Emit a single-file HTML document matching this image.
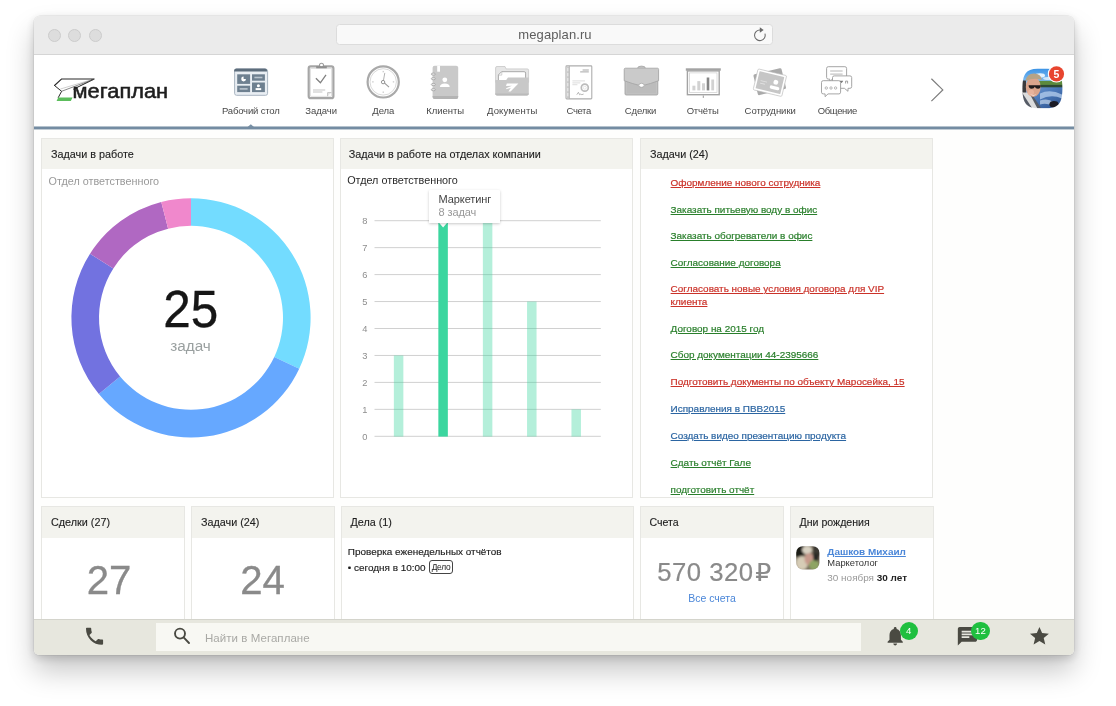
<!DOCTYPE html>
<html lang="ru">
<head>
<meta charset="utf-8">
<title>Мегаплан</title>
<style>
*{box-sizing:border-box;margin:0;padding:0}
html,body{width:1116px;height:706px;overflow:hidden;background:#fff}
body{font-family:"Liberation Sans",Arial,sans-serif;position:relative;color:#222}
.abs{position:absolute}
#win{will-change:transform;position:absolute;left:34px;top:16px;width:1040px;height:639px;border-radius:6px 6px 5px 5px;background:#fefefd;
  box-shadow:0 0 0 0.5px rgba(0,0,0,.10),0 16px 28px rgba(0,0,0,.22),0 3px 10px rgba(0,0,0,.16);overflow:hidden}
#tb{position:absolute;left:0;top:0;width:1040px;height:38.5px;background:#ebebeb;border-bottom:1px solid #d5d5d5}
.tl{position:absolute;top:12.5px;width:13px;height:13px;border-radius:50%;background:#dddddd;border:0.7px solid #cccccc}
#url{position:absolute;left:301.5px;top:8px;width:437px;height:21px;background:#f9f9f9;border:1px solid #dcdcdc;border-radius:3.5px;
  text-align:center;font-size:13px;line-height:20.6px;color:#5e5e5e;letter-spacing:.1px}
#nav{position:absolute;left:0;top:38.5px;width:1040px;height:72px;background:#fff}
#navline{position:absolute;left:0;top:110px;width:1040px;height:4px;background:linear-gradient(to bottom,rgba(120,144,165,.55) 0,rgba(120,144,165,.55) 1px,#748ca2 1px,#748ca2 3px,rgba(120,144,165,.45) 3px,rgba(120,144,165,.45) 4px)}
.ni{position:absolute;top:0;height:72px;text-align:center}
.nl{position:absolute;top:50.5px;font-size:9.5px;letter-spacing:-.19px;color:#484848;white-space:nowrap;transform:translateX(-50%);line-height:11px}
.panel{position:absolute;background:#fff;border:1px solid #e7e7e3}
.ph{position:absolute;left:0;top:0;right:0;height:30px;background:#f3f3ee;font-size:10.8px;line-height:30px;padding-left:9px;color:#1e1e1e;white-space:nowrap;-webkit-text-stroke:.12px #1e1e1e}
a{text-decoration:underline}
.tk{margin-top:-1.2px;position:absolute;left:29.6px;font-size:9.95px;line-height:11.5px;white-space:nowrap;-webkit-text-stroke:.2px currentColor}
.r{color:#cb3229}.g{color:#297f2b}.b{color:#2b65a2}
#bar{position:absolute;left:0;top:603px;width:1040px;height:36px;background:#e7e7de;border-top:1px solid #d4d4cc}
#search{position:absolute;left:122px;top:3px;width:705px;height:28px;background:#f8f8f3}
.badge{position:absolute;width:18.4px;height:18.4px;border-radius:50%;background:#1fbf3f;color:#fff;font-size:9.6px;line-height:18.4px;text-align:center}
</style>
</head>
<body>
<div id="win">
  <div id="tb">
    <div class="tl" style="left:14px"></div>
    <div class="tl" style="left:34px"></div>
    <div class="tl" style="left:55px"></div>
    <div id="url"><span style="position:relative;left:1px">megaplan.ru</span>
      <svg class="abs" style="left:414px;top:0px" width="18" height="19" viewBox="750.5 25 18 19"><path d="M764.4 33.6 a5.300 5.300 0 1 1 -4.800 -3.600" fill="none" stroke="#6a6a6a" stroke-width="1.05"/><path d="M759.300 27.200 L763.200 30 L759.300 32.800 Z" fill="#6a6a6a"/></svg>
    </div>
  </div>
  <div id="nav">
<svg class="abs" style="left:0;top:0" width="1040" height="76" viewBox="34 54.5 1040 76">
  <!-- logo plane -->
  <g fill="none" stroke="#2a2a2a" stroke-width="1" stroke-linejoin="miter" stroke-linecap="round">
    <path d="M54.5 85 L61.500 78.500 L94.200 78.500 L73.600 88.600" stroke-width="1.05"/>
    <path d="M54.5 85 L61.600 90.800 L58.300 97"/>
    <path d="M61.600 90.800 L94.200 78.500" stroke-width=".7" stroke="#555"/>
    <path d="M60.800 88.400 L89 80" stroke-width=".45" stroke="#999"/>
  </g>
  <path d="M58.200 97 L72.600 97 L70.800 100.400 L56.600 100.400 Z" fill="#5cbd5c"/>
  <text x="72.6" y="97.4" font-family="'Liberation Sans',Arial,sans-serif" font-size="20.6" fill="#1e1e1e" stroke="#1e1e1e" stroke-width=".55" textLength="95.6" lengthAdjust="spacingAndGlyphs">мегаплан</text>

  <!-- dashboard icon -->
  <g>
    <rect x="234.6" y="68.6" width="33" height="26.2" rx="2" fill="#e9eef3" stroke="#a9b5c1" stroke-width="1"/>
    <path d="M234.1 70.900 v-.7 a2.2 2.2 0 0 1 2.2 -2.2 h28.6 a2.2 2.2 0 0 1 2.2 2.2 v.7 z" fill="#5d6d7c"/>
    <rect x="237.2" y="73.8" width="12.9" height="9.6" fill="#6e8090"/>
    <rect x="252" y="73.8" width="12.9" height="6.4" fill="#6e8090"/>
    <rect x="237.2" y="85.2" width="12.9" height="6.4" fill="#6e8090"/>
    <rect x="252" y="82" width="12.9" height="9.6" fill="#6e8090"/>
    <path d="M243.600 76.100 a2.400 2.400 0 1 0 2.400 2.400 h-2.400 z" fill="#fff"/>
    <rect x="254.4" y="76.2" width="8" height="1.6" fill="#b9c4ce"/>
    <rect x="239.6" y="87.6" width="8" height="1.6" fill="#b9c4ce"/>
    <circle cx="258.4" cy="85.3" r="1.5" fill="#fff"/>
    <rect x="255.6" y="87.6" width="5.6" height="2" fill="#fff"/>
  </g>

  <!-- tasks clipboard -->
  <g>
    <rect x="308.700" y="65.900" width="24.700" height="31.800" rx="2" fill="#fff" stroke="#a6a6a6" stroke-width="2.200"/>
    <rect x="310.700" y="67.900" width="20.700" height="27.800" fill="#fff" stroke="#d0d0d0" stroke-width=".6"/>
    <path d="M327.600 95.700 v-3.600 h3.800" fill="#e8e8e8" stroke="#b0b0b0" stroke-width=".7"/>
    <circle cx="321.500" cy="64.700" r="2" fill="#fff" stroke="#9a9a9a" stroke-width="1.100"/>
    <rect x="316.200" y="65.600" width="10.600" height="2.200" fill="#8f8f8f"/>
    <path d="M315.900 77.700 L320.400 82.300 L326 74.300" fill="none" stroke="#808080" stroke-width="1.300"/>
    <path d="M313 89.500 h12.200 M313 91.500 h9.400" stroke="#b4b4b4" stroke-width=".8"/>
  </g>

  <!-- clock -->
  <g>
    <circle cx="383.2" cy="81.4" r="15.6" fill="#fff" stroke="#a9a9a9" stroke-width="2.2"/>
    <circle cx="383.2" cy="81.4" r="13.2" fill="none" stroke="#cfcfcf" stroke-width=".8"/>
    <path d="M383.2 70.4 v1.4 M383.2 91 v1.4 M372.2 81.4 h1.4 M392.8 81.4 h1.4" stroke="#aaa" stroke-width=".8"/>
    <path d="M383.2 81.4 L384.8 72.4" stroke="#aaa" stroke-width=".9" fill="none"/>
    <path d="M383.2 81.4 L389 86.6" stroke="#999" stroke-width="1.1" fill="none"/>
    <circle cx="383.1" cy="81.6" r="1.7" fill="#fff" stroke="#888" stroke-width=".9"/>
  </g>

  <!-- clients book -->
  <g>
    <rect x="432.6" y="65.2" width="25.6" height="33.2" rx="2" fill="#c9c9c9"/>
    <path d="M432.6 95.4 h25.6 v1 a2 2 0 0 1 -2 2 h-21.6 a2 2 0 0 1 -2 -2 z" fill="#b4b4b4"/>
    <rect x="437.2" y="65.2" width="2.8" height="6" fill="#fff"/>
    <g fill="none" stroke="#a8a8a8" stroke-width=".9">
      <ellipse cx="433.4" cy="73.6" rx="2.1" ry="1.1" fill="#e6e6e6"/>
      <ellipse cx="433.4" cy="78.2" rx="2.1" ry="1.1" fill="#e6e6e6"/>
      <ellipse cx="433.4" cy="84" rx="2.1" ry="1.1" fill="#e6e6e6"/>
      <ellipse cx="433.4" cy="89.2" rx="2.1" ry="1.1" fill="#e6e6e6"/>
    </g>
    <circle cx="444.8" cy="79.3" r="2.4" fill="#fff"/>
    <path d="M439.9 86.6 q0 -3.6 4.9 -3.6 q4.9 0 4.9 3.6 z" fill="#fff"/>
  </g>

  <!-- documents folder -->
  <g>
    <path d="M495.600 67.400 a1.400 1.400 0 0 1 1.400 -1.400 h8 l1 2.400 h21.200 a1.400 1.400 0 0 1 1.400 1.400 v12 h-33 z" fill="#e6e6e6" stroke="#c2c2c2" stroke-width=".7"/>
    <path d="M498.400 80 v-5.600 l3.200 -3.200 h22.600 a1.400 1.400 0 0 1 1.400 1.400 v7.400 z" fill="#fff" stroke="#a0a0a0" stroke-width=".9"/>
    <path d="M498.600 74.600 h3.200 v-3.200" fill="none" stroke="#b4b4b4" stroke-width=".6"/>
    <path d="M495.200 79.600 h11 l1.800 -2.600 h20.800 v16.200 a1.800 1.800 0 0 1 -1.800 1.800 h-30 a1.800 1.800 0 0 1 -1.800 -1.800 z" fill="#c8c8c8"/>
    <path d="M495.200 93 h33.600 v.2 a1.800 1.800 0 0 1 -1.800 1.800 h-30 a1.800 1.800 0 0 1 -1.800 -1.800 z" fill="#bababa"/>
    <path d="M506.800 83.100 L518.400 83 L510.600 90.900 L508.400 90.900 L510.800 87.400 L505.800 88.800 L506.600 87.400 L512 85.200 L506 85.400 Z" fill="#fff"/>
  </g>

  <!-- invoices -->
  <g>
    <rect x="566" y="65.400" width="25.800" height="33" rx=".8" fill="#fff" stroke="#adadad" stroke-width="1.1"/>
    <rect x="566.500" y="65.900" width="2.700" height="32" fill="#c9c9c9"/>
    <path d="M569.400 65.600 v32.600" stroke="#ababab" stroke-width=".8"/>
    <path d="M567.800 67.400 v29.600" stroke="#f4f4f4" stroke-width=".9" stroke-dasharray="3.400 1.600"/>
    <path d="M582.600 69.500 h6.200 M580.200 71.400 h8.600" stroke="#9c9c9c" stroke-width=".9"/>
    <path d="M572.400 80.400 h12.600 M572.400 82.400 h8 M572.400 84.200 h5" stroke="#cfcfcf" stroke-width=".7"/>
    <circle cx="584.800" cy="87.200" r="3.500" fill="#fff" stroke="#bcbcbc" stroke-width="1.700"/>
    <circle cx="584.800" cy="87.200" r="1.500" fill="#fff" stroke="#d0d0d0" stroke-width=".5"/>
    <path d="M576.800 94.200 l1.600 -2.400 l1.200 2.400 q1.400 -1.400 2.200 0 l1.800 -.6" fill="none" stroke="#999" stroke-width=".7"/>
  </g>

  <!-- deals briefcase -->
  <g>
    <path d="M637.6 67.700 q0 -2.100 3.900 -2.100 q3.900 0 3.900 2.100" fill="#c6c6c6" stroke="#a4a4a4" stroke-width=".8"/>
    <rect x="625" y="69" width="32.800" height="25.500" rx="1.200" fill="#bcbcbc" stroke="#a6a6a6" stroke-width=".9"/>
    <rect x="626.300" y="70" width="30.200" height="23.300" rx=".6" fill="none" stroke="#c9c9c9" stroke-width=".5"/>
    <path d="M624.200 68.900 q0 -1.200 1.200 -1.200 h32 q1.200 0 1.200 1.200 v11.300 q-8.800 3.200 -14.400 4.500 h-5.600 q-5.600 -1.300 -14.400 -4.500 z" fill="#cacaca" stroke="#a2a2a2" stroke-width=".8" stroke-linejoin="round"/>
    <ellipse cx="641.500" cy="84.800" rx="2.700" ry="2" fill="#fff" stroke="#a6a6a6" stroke-width=".8"/>
  </g>

  <!-- reports board -->
  <g>
    <rect x="685.8" y="67.8" width="35" height="2.4" fill="#a3a3a3"/>
    <rect x="687.4" y="70.4" width="31.8" height="23.8" fill="#fff" stroke="#a3a3a3" stroke-width="1.4"/>
    <rect x="689.6" y="72.4" width="27.4" height="19.6" fill="none" stroke="#cdcdcd" stroke-width=".7"/>
    <rect x="692.4" y="85.2" width="3" height="4.7" fill="#d2d2d2"/>
    <rect x="697.3" y="80.6" width="3" height="9.3" fill="#d2d2d2"/>
    <rect x="702" y="82.8" width="3" height="7.1" fill="#d2d2d2"/>
    <rect x="706.7" y="77" width="2.6" height="12.9" fill="#858585"/>
    <rect x="711.3" y="79" width="2.8" height="10.9" fill="#d2d2d2"/>
    <path d="M703.3 95 v2.4" stroke="#999" stroke-width="1"/>
  </g>

  <!-- staff cards -->
  <g>
    <rect x="755.250" y="70.550" width="28.900" height="21.300" rx="1.600" fill="#aaaaaa" transform="rotate(-13.6 769.7 81.2)"/>
    <g transform="rotate(13.4 769.9 82.2)">
      <rect x="755.200" y="71.450" width="29.400" height="21.500" rx="1.300" fill="#fff" stroke="#b9b9b9" stroke-width=".6"/>
      <rect x="757.200" y="73.450" width="25.400" height="17.500" rx=".4" fill="#c6c6c6"/>
      <circle cx="775.600" cy="80.400" r="2.400" fill="#fff"/>
      <rect x="770.700" y="84.400" width="9.800" height="3.400" rx="1.700" fill="#fff"/>
      <rect x="760.400" y="81.900" width="6.600" height=".9" fill="#e2e2e2"/>
      <rect x="760.400" y="84.400" width="5" height=".9" fill="#e2e2e2"/>
    </g>
  </g>

  <!-- chat bubbles -->
  <g fill="#fff" stroke="#9c9c9c" stroke-width=".9" stroke-linejoin="round">
    <path d="M828.300 66.200 h16.600 a1.700 1.700 0 0 1 1.700 1.700 v9 a1.700 1.700 0 0 1 -1.700 1.700 h-12.600 l-2.600 2.600 v-2.600 h-1.400 a1.700 1.700 0 0 1 -1.700 -1.700 v-9 a1.700 1.700 0 0 1 1.700 -1.700 z"/>
    <path d="M834.200 75.400 h15.800 a1.700 1.700 0 0 1 1.700 1.700 v9 a1.700 1.700 0 0 1 -1.700 1.700 h-2 v3 l-3.600 -3 h-10.200 a1.700 1.700 0 0 1 -1.700 -1.700 v-9 a1.700 1.700 0 0 1 1.700 -1.700 z"/>
    <path d="M823.200 80.200 h15.700 a1.700 1.700 0 0 1 1.700 1.700 v9.800 a1.700 1.700 0 0 1 -1.700 1.700 h-10.900 l-2.900 2.800 v-2.800 h-1.900 a1.700 1.700 0 0 1 -1.700 -1.700 v-9.800 a1.700 1.700 0 0 1 1.700 -1.700 z"/>
    <path d="M830.200 70.500 h12.400 M830.200 73.600 h12.400" stroke="#a2a2a2" stroke-width=".8" fill="none"/>
    <circle cx="826.300" cy="87.500" r="1.200" stroke-width=".7"/>
    <circle cx="831" cy="87.500" r="1.200" stroke-width=".7"/>
    <circle cx="835.600" cy="87.500" r="1.200" stroke-width=".7"/>
    <path d="M840 80.400 h3 l-1.500 2 z" stroke="#777" stroke-width=".4" fill="#777"/>
    <path d="M845.600 83 v-2.400 h2 v2.400" stroke="#888" stroke-width=".8" fill="none"/>
  </g>

  <!-- chevron -->
  <path d="M931.4 78.2 L942.8 89.4 L931.4 100.6" fill="none" stroke="#7d7d7d" stroke-width="1.2"/>

  <!-- active marker -->
  <path d="M247.6 126.6 L250.8 123.8 L254 126.6 Z" fill="#7890a5"/>
</svg>
<div class="nl" style="left:216.8px;letter-spacing:-0.16px">Рабочий стол</div>
<div class="nl" style="left:287.2px;letter-spacing:-0.04px">Задачи</div>
<div class="nl" style="left:349.3px;letter-spacing:-0.05px">Дела</div>
<div class="nl" style="left:411.2px;letter-spacing:-0.03px">Клиенты</div>
<div class="nl" style="left:478.2px;letter-spacing:0.17px">Документы</div>
<div class="nl" style="left:544.7px;letter-spacing:-0.4px">Счета</div>
<div class="nl" style="left:606.5px;letter-spacing:-0.18px">Сделки</div>
<div class="nl" style="left:668.6px;letter-spacing:-0.23px">Отчёты</div>
<div class="nl" style="left:736.2px;letter-spacing:-0.02px">Сотрудники</div>
<div class="nl" style="left:803.3px;letter-spacing:-0.36px">Общение</div>
</div>
  <svg class="abs" style="left:986px;top:48.5px" width="48" height="48" viewBox="1020 64.5 48 48">
  <defs><clipPath id="av"><path d="M1042.4 68 c13.5 0 20 1.600 20 19.900 c0 18.300 -6.500 19.900 -20 19.900 c-13.500 0 -20 -1.600 -20 -19.900 c0 -18.300 6.500 -19.900 20 -19.900 z"/></clipPath>
  <filter id="avb" x="-20%" y="-20%" width="140%" height="140%"><feGaussianBlur stdDeviation=".7"/></filter>
  <linearGradient id="sky" x1="0" y1="0" x2="0" y2="1"><stop offset="0" stop-color="#2686e2"/><stop offset="1" stop-color="#9ccdf4"/></linearGradient>
  <linearGradient id="wat" x1="0" y1="0" x2="1" y2="1"><stop offset="0" stop-color="#86a9d6"/><stop offset=".45" stop-color="#4a78ba"/><stop offset="1" stop-color="#27487f"/></linearGradient></defs>
  <g clip-path="url(#av)"><g filter="url(#avb)">
    <rect x="1018" y="64" width="50" height="22" fill="url(#sky)"/>
    <ellipse cx="1040" cy="75" rx="5" ry="2.200" fill="#e3f1fc"/>
    <ellipse cx="1049" cy="78" rx="6" ry="1.600" fill="#cfe6fa"/>
    <rect x="1018" y="85" width="50" height="26" fill="url(#wat)"/>
    <rect x="1036" y="80.400" width="30" height="4.800" fill="#5c8a3e"/>
    <rect x="1036" y="84.400" width="30" height="2.400" fill="#2d4a30"/>
    <path d="M1040 93 q10 -5 22 1 l0 4 q-11 -5 -22 1 z" fill="#b7cfee" opacity=".75"/>
    <path d="M1040 100 q8 -3 14 2 l-2 3 q-6 -3 -12 -1 z" fill="#dbe7f6" opacity=".6"/>
    <ellipse cx="1054" cy="103.800" rx="4.600" ry="3.400" fill="#1a1d28"/>
    <rect x="1020" y="80" width="6" height="14" fill="#3b3a3c"/>
    <path d="M1020 95 q6 -4 12 -1 l10 15 h-22 z" fill="#565b66"/>
    <path d="M1022 92 l7 0 l9 17 h-5 z" fill="#dcdcdc"/>
    <ellipse cx="1033.200" cy="86.400" rx="7.400" ry="10" fill="#dba58c"/>
    <ellipse cx="1031" cy="92" rx="3" ry="3" fill="#e8b39c"/>
    <path d="M1025.600 80.600 q1 -7.600 8.400 -7.600 q7 0 8 6.600 q-8 -3 -16.400 1 z" fill="#b5a386"/>
    <path d="M1028.600 84.800 h12 q.4 3.400 -2.600 3.400 q-2.400 0 -3.200 -2 q-.6 2 -3.200 2 q-3 0 -3 -3.400 z" fill="#201d1c"/>
    <path d="M1030 93.400 q3.400 2.200 6.600 0 q-3.200 3.600 -6.600 0 z" fill="#f6efeb"/>
  </g></g>
  <circle cx="1056.500" cy="73.400" r="8.700" fill="#fff"/>
  <circle cx="1056.500" cy="73.400" r="7.600" fill="#e8452f"/>
  <text x="1056.500" y="77.100" text-anchor="middle" font-family="'Liberation Sans',Arial,sans-serif" font-weight="bold" font-size="10.5" fill="#fff">5</text>
</svg>
  <div id="navline"></div>

  <!-- panels row 1 -->
  <div class="panel" style="left:7px;top:122px;width:293px;height:360px">
    <div class="ph">Задачи в работе</div>
    <div class="abs" style="left:6.5px;top:36px;font-size:10.8px;color:#999;white-space:nowrap">Отдел ответственного</div>
<svg class="abs" style="left:0;top:0" width="291" height="359" viewBox="42.5 139 291 359">
<path d="M191.50 198.20 A119.6 119.6 0 0 1 299.72 368.72 L274.74 356.97 A92.0 92.0 0 0 0 191.50 225.80 Z" fill="#73dcff"/>
<path d="M299.72 368.72 A119.6 119.6 0 0 1 99.35 394.04 L120.61 376.44 A92.0 92.0 0 0 0 274.74 356.97 Z" fill="#66a8ff"/>
<path d="M99.35 394.04 A119.6 119.6 0 0 1 90.52 253.72 L113.82 268.50 A92.0 92.0 0 0 0 120.61 376.44 Z" fill="#7272e0"/>
<path d="M90.52 253.72 A119.6 119.6 0 0 1 161.76 201.96 L168.62 228.69 A92.0 92.0 0 0 0 113.82 268.50 Z" fill="#b068c2"/>
<path d="M161.76 201.96 A119.6 119.6 0 0 1 191.50 198.20 L191.50 225.80 A92.0 92.0 0 0 0 168.62 228.69 Z" fill="#f088cc"/>
<text x="191.3" y="326.9" text-anchor="middle" font-family="'Liberation Sans',Arial,sans-serif" font-size="51.2" fill="#161616" stroke="#161616" stroke-width=".35" transform="translate(191.3 0) scale(.965 1) translate(-191.3 0)">25</text>
</svg>

<div class="abs" style="left:0;width:297px;top:197.5px;text-align:center;font-size:15.3px;line-height:18px;color:#9aa0a0">задач</div>

  </div>
  <div class="panel" style="left:306px;top:122px;width:293px;height:360px">
    <div class="ph" style="padding-left:7.8px">Задачи в работе на отделах компании</div>
    <div class="abs" style="left:6.2px;top:35px;font-size:10.8px;color:#2a2a2a;white-space:nowrap">Отдел ответственного</div>
<svg class="abs" style="left:0;top:0;font-family:'Liberation Sans',Arial,sans-serif" width="292" height="358" viewBox="341 139 292 358">
<path d="M374.5 436.30 H600.8" stroke="#d0d0d0" stroke-width="1"/>
<text x="364.9" y="439.60" text-anchor="middle" font-size="9.3" fill="#8e8e8e">0</text>
<path d="M374.5 409.35 H600.8" stroke="#d0d0d0" stroke-width="1"/>
<text x="364.9" y="412.65" text-anchor="middle" font-size="9.3" fill="#8e8e8e">1</text>
<path d="M374.5 382.40 H600.8" stroke="#d0d0d0" stroke-width="1"/>
<text x="364.9" y="385.70" text-anchor="middle" font-size="9.3" fill="#8e8e8e">2</text>
<path d="M374.5 355.45 H600.8" stroke="#d0d0d0" stroke-width="1"/>
<text x="364.9" y="358.75" text-anchor="middle" font-size="9.3" fill="#8e8e8e">3</text>
<path d="M374.5 328.50 H600.8" stroke="#d0d0d0" stroke-width="1"/>
<text x="364.9" y="331.80" text-anchor="middle" font-size="9.3" fill="#8e8e8e">4</text>
<path d="M374.5 301.55 H600.8" stroke="#d0d0d0" stroke-width="1"/>
<text x="364.9" y="304.85" text-anchor="middle" font-size="9.3" fill="#8e8e8e">5</text>
<path d="M374.5 274.60 H600.8" stroke="#d0d0d0" stroke-width="1"/>
<text x="364.9" y="277.90" text-anchor="middle" font-size="9.3" fill="#8e8e8e">6</text>
<path d="M374.5 247.65 H600.8" stroke="#d0d0d0" stroke-width="1"/>
<text x="364.9" y="250.95" text-anchor="middle" font-size="9.3" fill="#8e8e8e">7</text>
<path d="M374.5 220.70 H600.8" stroke="#d0d0d0" stroke-width="1"/>
<text x="364.9" y="224.00" text-anchor="middle" font-size="9.3" fill="#8e8e8e">8</text>
<rect x="393.85" y="355.45" width="9.5" height="81.15" fill="#3bd69f" fill-opacity=".38"/>
<rect x="438.35" y="220.70" width="9.5" height="215.90" fill="#3bd69f"/>
<rect x="482.85" y="220.70" width="9.5" height="215.90" fill="#3bd69f" fill-opacity=".38"/>
<rect x="527.05" y="301.55" width="9.5" height="135.05" fill="#3bd69f" fill-opacity=".38"/>
<rect x="571.45" y="409.35" width="9.5" height="27.25" fill="#3bd69f" fill-opacity=".38"/>

<path d="M438.3 222 h9.6 l-4.8 5.6 z" fill="#fff"/>
</svg>
<div class="abs" style="left:88.3px;top:50.5px;width:71px;height:33.2px;background:#fff;box-shadow:0 1px 3px rgba(0,0,0,.22);border-radius:1px"></div>
<div class="abs" style="left:88.3px;top:78px;width:71px;height:6px;background:#fff"></div>
<div class="abs" style="left:97.6px;top:54px;font-size:11px;line-height:13px;color:#444;white-space:nowrap;letter-spacing:-.1px">Маркетинг</div>
<div class="abs" style="left:97.6px;top:67.2px;font-size:11px;line-height:13px;color:#999;white-space:nowrap;letter-spacing:-.1px">8 задач</div>

  </div>
  <div class="panel" style="left:606px;top:122px;width:293px;height:360px;overflow:hidden">
    <div class="ph">Задачи (24)</div>
    <a class="tk r" style="top:39px">Оформление нового сотрудника</a>
    <a class="tk g" style="top:65.7px">Заказать питьевую воду в офис</a>
    <a class="tk g" style="top:92.4px">Заказать обогреватели в офис</a>
    <a class="tk g" style="top:119.2px">Согласование договора</a>
    <a class="tk r" style="top:145.6px;line-height:12.2px">Согласовать новые условия договора для VIP<br>клиента</a>
    <a class="tk g" style="top:184.8px">Договор на 2015 год</a>
    <a class="tk g" style="top:211.6px">Сбор документации 44-2395666</a>
    <a class="tk r" style="top:238.3px">Подготовить документы по объекту Маросейка, 15</a>
    <a class="tk b" style="top:265.2px">Исправления в ПВВ2015</a>
    <a class="tk b" style="top:292px">Создать видео презентацию продукта</a>
    <a class="tk g" style="top:319.1px">Сдать отчёт Гале</a>
    <a class="tk g" style="top:345.8px">подготовить отчёт</a>
  </div>

  <!-- panels row 2 -->
  <div class="panel" style="left:7px;top:490px;width:144px;height:119px">
    <div class="ph" style="height:30.5px;line-height:30px">Сделки (27)</div>
    <div class="abs" style="left:25px;top:51.6px;width:84px;text-align:center;font-size:40.2px;line-height:44px;color:#8a8a8a;-webkit-text-stroke:.3px #8a8a8a">27</div>
  </div>
  <div class="panel" style="left:157px;top:490px;width:144px;height:119px">
    <div class="ph" style="height:30.5px;line-height:30px">Задачи (24)</div>
    <div class="abs" style="left:28.6px;top:51.6px;width:84px;text-align:center;font-size:40.2px;line-height:44px;color:#8a8a8a;-webkit-text-stroke:.3px #8a8a8a">24</div>
  </div>
  <div class="panel" style="left:306.5px;top:490px;width:293.5px;height:119px">
    <div class="ph" style="height:30.5px;line-height:30px">Дела (1)</div>
    <div class="abs" style="left:6.3px;top:39.2px;font-size:9.95px;line-height:12px;color:#1c1c1c;white-space:nowrap;-webkit-text-stroke:.15px #1c1c1c">Проверка еженедельных отчётов</div>
    <div class="abs" style="left:6.3px;top:54.7px;font-size:9.95px;line-height:12px;color:#1c1c1c;white-space:nowrap;-webkit-text-stroke:.15px #1c1c1c">• сегодня в 10:00</div>
    <div class="abs" style="left:87.6px;top:53.2px;width:24px;height:14px;border:1px solid #444;border-radius:3px;font-size:8.4px;line-height:12px;text-align:center;color:#222;letter-spacing:-.2px">Дело</div>
  </div>
  <div class="panel" style="left:606px;top:490px;width:144px;height:119px">
    <div class="ph" style="height:30.5px;line-height:30px;padding-left:8.5px;font-size:10.6px">Счета</div>
    <div class="abs" style="left:16.2px;top:49.6px;font-size:25.7px;line-height:30px;color:#8a8a8a;-webkit-text-stroke:.2px #8a8a8a;white-space:nowrap;letter-spacing:.5px">570 320<span style="font-family:'DejaVu Sans',sans-serif;font-size:25px;margin-left:1.6px;letter-spacing:0">₽</span></div>
    <div class="abs" style="left:0;width:142px;top:85px;text-align:center;font-size:10.5px;line-height:13px;color:#4a86d8">Все счета</div>
  </div>
  <div class="panel" style="left:756px;top:490px;width:143.5px;height:119px">
    <div class="ph" style="height:30.5px;line-height:30px;padding-left:8.5px;font-size:10.6px">Дни рождения</div>
    <svg class="abs" style="left:5.3px;top:39px" width="24" height="24" viewBox="0 0 24 24"><defs><clipPath id="bav"><rect x="0.2" y="0.2" width="23.2" height="23.2" rx="6.5"/></clipPath><filter id="bblur" x="-20%" y="-20%" width="140%" height="140%"><feGaussianBlur stdDeviation="1.1"/></filter></defs>
      <g clip-path="url(#bav)"><g filter="url(#bblur)"><rect x="-2" y="-2" width="28" height="28" fill="#7a705e"/><rect x="-2" y="-2" width="10" height="13" fill="#1c1a18"/><rect x="17" y="-2" width="9" height="12" fill="#3a3832"/><ellipse cx="11" cy="4" rx="5" ry="4" fill="#d9d2c2"/><ellipse cx="6" cy="17" rx="6" ry="7" fill="#d6ccb6"/><ellipse cx="13" cy="13" rx="4.500" ry="6" fill="#c79a8c"/><ellipse cx="18" cy="19" rx="5" ry="5" fill="#8ea463"/><ellipse cx="20" cy="11" rx="3" ry="4" fill="#2a2a26"/></g></g></svg>
    <a class="abs" style="left:36.3px;top:39.4px;font-size:9.95px;line-height:12px;font-weight:bold;color:#4a86d8;white-space:nowrap">Дашков Михаил</a>
    <div class="abs" style="left:36.3px;top:49.5px;font-size:9.35px;line-height:12px;color:#333;white-space:nowrap">Маркетолог</div>
    <div class="abs" style="left:36.3px;top:65.4px;font-size:9.95px;line-height:12px;color:#999;white-space:nowrap">30 ноября <b style="color:#222">30 лет</b></div>
  </div>

  <div id="bar">
    <div id="search"></div>
<svg class="abs" style="left:0;top:0" width="1040" height="35" viewBox="34 620 1040 35">
  <path transform="translate(83.15 624.85) scale(.95)" d="M6.62 10.79c1.44 2.83 3.76 5.14 6.59 6.59l2.2-2.2c.27-.27.67-.36 1.02-.24 1.12.37 2.33.57 3.57.57.55 0 1 .45 1 1V20c0 .55-.45 1-1 1-9.39 0-17-7.610-17-17 0-.55.45-1 1-1h3.500c.55 0 1 .45 1 1 0 1.250.2 2.450.57 3.570.11.350.03.740-.25 1.020l-2.200 2.200z" fill="#4a4a42"/>
  <g fill="none" stroke="#4a4a42" stroke-width="1.9"><circle cx="180" cy="633.6" r="5"/><path d="M183.6 637.4 L189 643" stroke-linecap="round"/></g>
  <path transform="translate(883.8 624.6) scale(.95)" d="M12 22c1.100 0 2-.9 2-2h-4c0 1.100.89 2 2 2zm6-6v-5c0-3.070-1.640-5.640-4.500-6.320V4c0-.83-.67-1.500-1.500-1.500s-1.500.67-1.500 1.500v.68C7.630 5.360 6 7.920 6 11v5l-2 2v1h16v-1l-2-2z" fill="#4a4a42"/>
  <path transform="translate(955.9 625.2) scale(.96 .92)" d="M20 2H4c-1.100 0-1.990.9-1.990 2L2 22l4-4h14c1.100 0 2-.9 2-2V4c0-1.100-.9-2-2-2zM6 9h12v2H6V9zm8 5H6v-2h8v2zm4-6H6V6h12v2z" fill="#4a4a42"/>
  <path transform="translate(1028.1 625.2) scale(.945 .916)" d="M12 17.27L18.180 21l-1.640-7.030L22 9.240l-7.190-.61L12 2 9.190 8.630 2 9.240l5.460 4.730L5.820 21z" fill="#4a4a42"/>
</svg>
<div class="abs" style="left:171px;top:11.6px;font-size:11.5px;line-height:13px;color:#a9a9a5;white-space:nowrap;letter-spacing:.05px">Найти в Мегаплане</div>
<div class="badge" style="left:865.6px;top:1.8px">4</div>
<div class="badge" style="left:937.2px;top:1.8px">12</div>

  </div>
</div>
</body>
</html>
